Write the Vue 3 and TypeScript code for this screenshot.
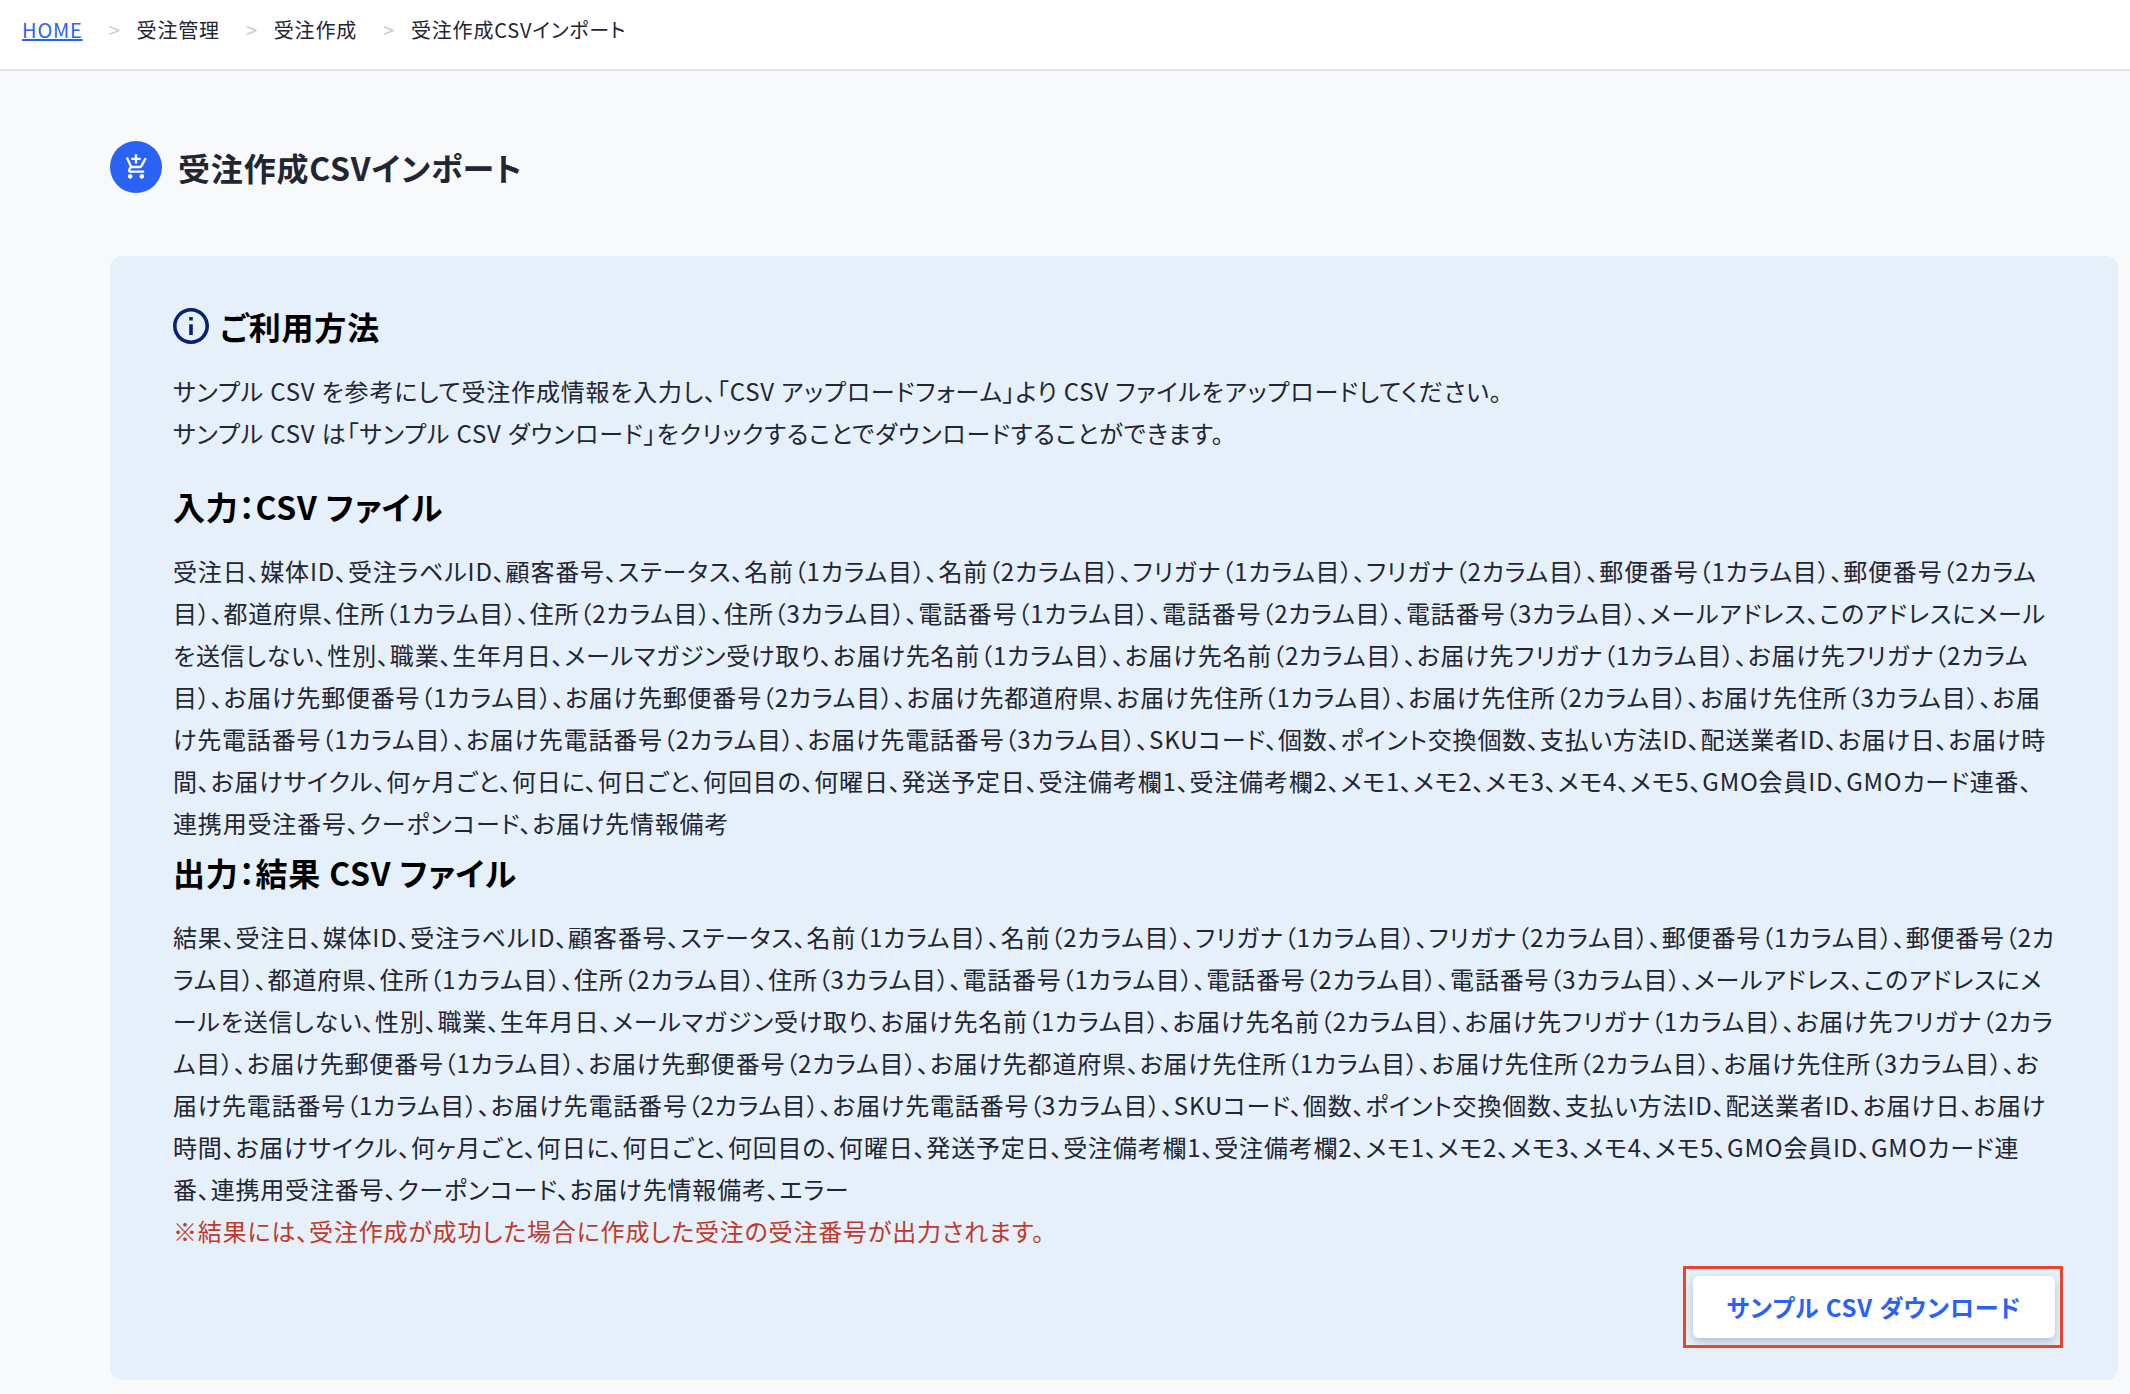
<script setup lang="ts">
interface Crumb {
  label: string
  href?: string
}

const crumbs: Crumb[] = [
  { label: 'HOME', href: '#' },
  { label: '受注管理' },
  { label: '受注作成' },
  { label: '受注作成CSVインポート' },
]

const split = (name: string, count: number): string[] =>
  Array.from({ length: count }, (_, i) => `${name}（${i + 1}カラム目）`)

const inputColumns: string[] = [
  '受注日', '媒体ID', '受注ラベルID', '顧客番号', 'ステータス',
  ...split('名前', 2),
  ...split('フリガナ', 2),
  ...split('郵便番号', 2),
  '都道府県',
  ...split('住所', 3),
  ...split('電話番号', 3),
  'メールアドレス', 'このアドレスにメールを送信しない', '性別', '職業', '生年月日', 'メールマガジン受け取り',
  ...split('お届け先名前', 2),
  ...split('お届け先フリガナ', 2),
  ...split('お届け先郵便番号', 2),
  'お届け先都道府県',
  ...split('お届け先住所', 3),
  ...split('お届け先電話番号', 3),
  'SKUコード', '個数', 'ポイント交換個数', '支払い方法ID', '配送業者ID', 'お届け日', 'お届け時間',
  'お届けサイクル', '何ヶ月ごと', '何日に', '何日ごと', '何回目の', '何曜日', '発送予定日',
  '受注備考欄1', '受注備考欄2', 'メモ1', 'メモ2', 'メモ3', 'メモ4', 'メモ5',
  'GMO会員ID', 'GMOカード連番', '連携用受注番号', 'クーポンコード', 'お届け先情報備考',
]

const inputText = inputColumns.join('、')
const outputText = ['結果', ...inputColumns, 'エラー'].join('、')
</script>

<template>
  <div class="page" lang="ja">
    <nav class="crumbs" aria-label="パンくずリスト">
      <ol>
        <li v-for="crumb in crumbs" :key="crumb.label">
          <a v-if="crumb.href" :href="crumb.href">{{ crumb.label }}</a>
          <span v-else>{{ crumb.label }}</span>
        </li>
      </ol>
    </nav>

    <main>
      <header class="title">
        <span class="badge">
          <svg viewBox="0 0 24 24" aria-hidden="true">
            <path d="M11 9h2V6h3V4h-3V1h-2v3H8v2h3v3zm-4 9c-1.1 0-1.99.9-1.99 2S5.9 22 7 22s2-.9 2-2-.9-2-2-2zm10 0c-1.1 0-1.99.9-1.99 2s.89 2 1.99 2 2-.9 2-2-.9-2-2-2zm-8.9-5h7.45c.75 0 1.41-.41 1.75-1.03l3.86-7.01L19.42 4l-3.87 7H8.53L5.1 3.5l-1.8.8 3.3 7.29-1.35 2.44C4.52 15.37 5.48 17 7 17h12v-2H7l1.1-2z" />
          </svg>
        </span>
        <h1>受注作成CSVインポート</h1>
      </header>

      <section class="panel">
        <h2 class="with-icon">
          <svg viewBox="2 2 20 20" aria-hidden="true">
            <path d="M11 7h2v2h-2zm0 4h2v6h-2zm1-9C6.48 2 2 6.48 2 12s4.48 10 10 10 10-4.48 10-10S17.52 2 12 2zm0 18c-4.41 0-8-3.59-8-8s3.59-8 8-8 8 3.59 8 8-3.59 8-8 8z" />
          </svg>
          ご利用方法
        </h2>
        <p>
          サンプル CSV を参考にして受注作成情報を入力し、「CSV アップロードフォーム」より CSV ファイルをアップロードしてください。<br />
          サンプル CSV は「サンプル CSV ダウンロード」をクリックすることでダウンロードすることができます。
        </p>

        <h2 class="spaced">入力：CSV ファイル</h2>
        <p>{{ inputText }}</p>

        <h2>出力：結果 CSV ファイル</h2>
        <p>{{ outputText }}</p>
        <p class="note">※結果には、受注作成が成功した場合に作成した受注の受注番号が出力されます。</p>

        <div class="actions">
          <button type="button">サンプル CSV ダウンロード</button>
        </div>
      </section>
    </main>
  </div>
</template>

<style>
body {
  background: #f8f9fb;
}
</style>

<style scoped>
.page {
  font-family: 'Noto Sans CJK JP', sans-serif;
  font-feature-settings: 'palt';
  font-size: 24px;
  line-height: 42px;
  letter-spacing: 0.034em;
  color: #222632;
}

.crumbs {
  padding: 14px 22px 23px;
  background: #fff;
  border-bottom: 2px solid #e1e3ea;
  font-size: 20px;
  line-height: 32px;
}

.crumbs ol {
  display: flex;
  margin: 0;
  padding: 0;
  list-style: none;
}

.crumbs li + li::before {
  content: '>';
  margin: 0 16px 0 26px;
  color: #c5c9d6;
}

.crumbs a {
  color: #2a62f6;
}

main {
  padding: 70px 12px 14px 110px;
}

.title {
  display: flex;
  align-items: center;
  gap: 16px;
  margin-bottom: 63px;
}

.badge {
  display: flex;
  align-items: center;
  justify-content: center;
  width: 52px;
  height: 52px;
  border-radius: 50%;
  background: #2a62f6;
}

.badge svg {
  width: 28px;
  height: 28px;
  fill: #fff;
}

h1,
h2 {
  margin: 0;
  font-size: 32px;
  font-weight: 700;
}

h1 {
  line-height: 52px;
}

h2 {
  margin-bottom: 16px;
  line-height: 56px;
  color: #000;
}

.spaced {
  margin-top: 24px;
}

.with-icon {
  display: flex;
  align-items: center;
  gap: 11px;
}

.with-icon svg {
  width: 36px;
  height: 36px;
  fill: #0b2270;
}

.panel {
  padding: 42px 63px;
  border-radius: 12px;
  background: #e5f0fa;
}

p {
  margin: 0;
}

.note {
  color: #c0392b;
}

.actions {
  display: flex;
  justify-content: flex-end;
  margin-top: 24px;
}

button {
  position: relative;
  padding: 10px 34px 10px 33px;
  border: 0;
  border-radius: 6px;
  background: #fff;
  box-shadow: 0 4px 8px rgba(40, 60, 80, 0.25);
  color: #2a62f6;
  font: inherit;
  font-weight: 700;
  font-feature-settings: inherit;
  letter-spacing: inherit;
  cursor: pointer;
}

/* highlight frame around the download button */
button::after {
  content: '';
  position: absolute;
  inset: -10px -8px -10px -10px;
  border: 3px solid #e8452c;
}
</style>
